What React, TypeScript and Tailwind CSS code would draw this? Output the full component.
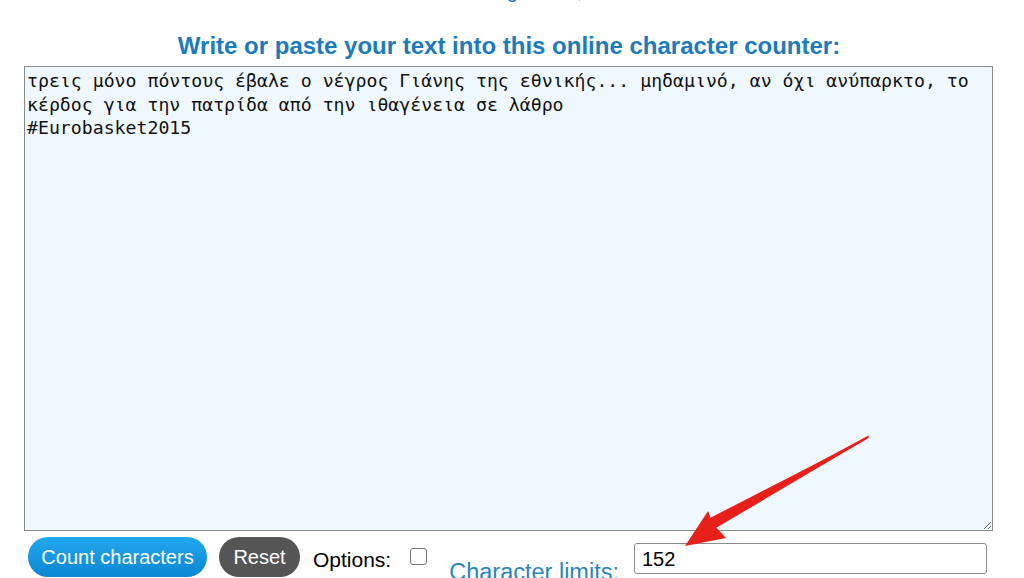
import React from "react";

export default function App() {
  const text =
    "τρεις μόνο πόντους έβαλε ο νέγρος Γιάνης της εθνικής... μηδαμινό, αν όχι ανύπαρκτο, το κέρδος για την πατρίδα από την ιθαγένεια σε λάθρο\n#Eurobasket2015";
  return (
    <div className="relative w-[1024px] h-[578px] overflow-hidden bg-white" style={{ fontFamily: '"Liberation Sans", Arial, sans-serif' }}>
      <div className="h-[10px] overflow-hidden">
        <div className="mt-[-21px] pl-[270px] text-[20px] leading-[24px] text-[#1b7bbd] whitespace-nowrap">
          Free online tool for counting words, characters
        </div>
      </div>
      <h2 className="mt-[22px] pr-[6px] text-center text-[24px] leading-[28px] font-bold text-[#1b7bbd]">
        Write or paste your text into this online character counter:
      </h2>
      <div className="px-[24px] mt-[6px] pr-[31px]">
        <textarea
          defaultValue={text}
          className="block w-full h-[465px] bg-[#f0f8ff] border border-[#8a8a8a] px-[2px] py-[2px] text-[18.2px] leading-[23.5px] text-[#111] outline-none"
          style={{ fontFamily: '"DejaVu Sans Mono", "Liberation Mono", monospace' }}
          spellCheck={false}
        />
      </div>
      <div className="flex items-start mt-[6px] pl-[28px]">
        <button className="h-[40px] w-[179px] rounded-full bg-gradient-to-b from-[#22a8ee] to-[#0a86d2] text-white text-[20px]">
          Count characters
        </button>
        <button className="ml-[12px] h-[40px] w-[81px] rounded-full bg-[#555555] text-white text-[20px]">
          Reset
        </button>
        <span className="ml-[13px] mt-[7px] text-[21px] text-black">Options:</span>
        <span className="ml-[19px] mt-[11px] w-[17px] h-[17px] rounded-[3px] border border-[#767676] bg-white" />
        <span className="ml-[22px] mt-[21px] text-[23.5px] leading-[28px] text-[#2a86b8] whitespace-nowrap">Character limits:</span>
        <div className="ml-[15px] mt-[6px] w-[353px] h-[31px] border border-[#8a8a8a] rounded-[3px] bg-white flex items-center px-[7px] text-[20px] text-black">
          152
        </div>
      </div>
      <svg className="absolute left-0 top-0 pointer-events-none" width="1024" height="578">
        <path d="M868 437 L867 439 L712 528 L706 520 Z" fill="#e8201a" />
        <path d="M868 437 L704 525 L709 531 Z" fill="#e8201a" stroke="#e8201a" strokeWidth="2" strokeLinejoin="round" />
        <path d="M685 546 L708 511 L713 524 L726 538 Z" fill="#e8201a" />
      </svg>
    </div>
  );
}
